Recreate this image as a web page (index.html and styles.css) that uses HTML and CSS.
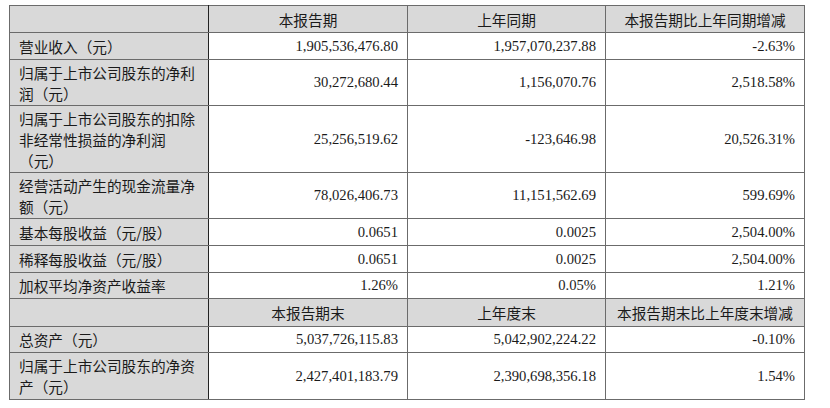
FILE: index.html
```html
<!DOCTYPE html>
<html lang="zh-CN">
<head>
<meta charset="utf-8">
<link rel="stylesheet" href="styles.css">
</head>
<body>
<table class="fin">
  <colgroup>
    <col class="c1"><col class="c2"><col class="c3"><col class="c4">
  </colgroup>
  <tr class="h27 head">
    <th></th><th>本报告期</th><th>上年同期</th><th>本报告期比上年同期增减</th>
  </tr>
  <tr class="h27">
    <td class="lbl">营业收入（元）</td><td>1,905,536,476.80</td><td>1,957,070,237.88</td><td>-2.63%</td>
  </tr>
  <tr class="h46">
    <td class="lbl">归属于上市公司股东的净利润（元）</td><td>30,272,680.44</td><td>1,156,070.76</td><td>2,518.58%</td>
  </tr>
  <tr class="h67">
    <td class="lbl">归属于上市公司股东的扣除非经常性损益的净利润（元）</td><td>25,256,519.62</td><td>-123,646.98</td><td>20,526.31%</td>
  </tr>
  <tr class="h46">
    <td class="lbl">经营活动产生的现金流量净额（元）</td><td>78,026,406.73</td><td>11,151,562.69</td><td>599.69%</td>
  </tr>
  <tr class="h27">
    <td class="lbl">基本每股收益（元/股）</td><td>0.0651</td><td>0.0025</td><td>2,504.00%</td>
  </tr>
  <tr class="h27">
    <td class="lbl">稀释每股收益（元/股）</td><td>0.0651</td><td>0.0025</td><td>2,504.00%</td>
  </tr>
  <tr class="h26">
    <td class="lbl">加权平均净资产收益率</td><td>1.26%</td><td>0.05%</td><td>1.21%</td>
  </tr>
  <tr class="h28 head">
    <th></th><th>本报告期末</th><th>上年度末</th><th>本报告期末比上年度末增减</th>
  </tr>
  <tr class="h26">
    <td class="lbl">总资产（元）</td><td>5,037,726,115.83</td><td>5,042,902,224.22</td><td>-0.10%</td>
  </tr>
  <tr class="h47">
    <td class="lbl">归属于上市公司股东的净资产（元）</td><td>2,427,401,183.79</td><td>2,390,698,356.18</td><td>1.54%</td>
  </tr>
</table>
</body>
</html>
```

FILE: styles.css
```css
html, body {
  margin: 0;
  padding: 0;
  background: #ffffff;
}
body {
  padding: 5px 0 0 9px;
}
.fin {
  border-collapse: collapse;
  table-layout: fixed;
  width: 796px;
  font-family: "Liberation Serif", "Noto Sans CJK SC", serif;
  font-size: 14.67px;
  line-height: 21px;
  color: #1a1a1a;
  border: 1px solid #444;
}
.c1 { width: 199px; }
.c2 { width: 199px; }
.c3 { width: 198px; }
.c4 { width: 199px; }
.fin th, .fin td {
  border: 1px solid #6b6b6b;
  padding: 0 9px;
  vertical-align: middle;
}
.fin th {
  background: #d9d9d9;
  font-weight: normal;
  text-align: center;
}
.fin td {
  text-align: right;
  background: #ffffff;
}
.fin td.lbl {
  text-align: left;
  background: #d9d9d9;
  font-family: "Noto Sans CJK SC", sans-serif;
}
.fin th { font-family: "Noto Sans CJK SC", sans-serif; }
.h26 { height: 26px; }
.h27 { height: 27px; }
.h28 { height: 28px; }
.h46 { height: 46px; }
.h47 { height: 47px; }
.h67 { height: 67px; }
.fin td:first-child, .fin th:first-child { border-right-color: #222; }
```
